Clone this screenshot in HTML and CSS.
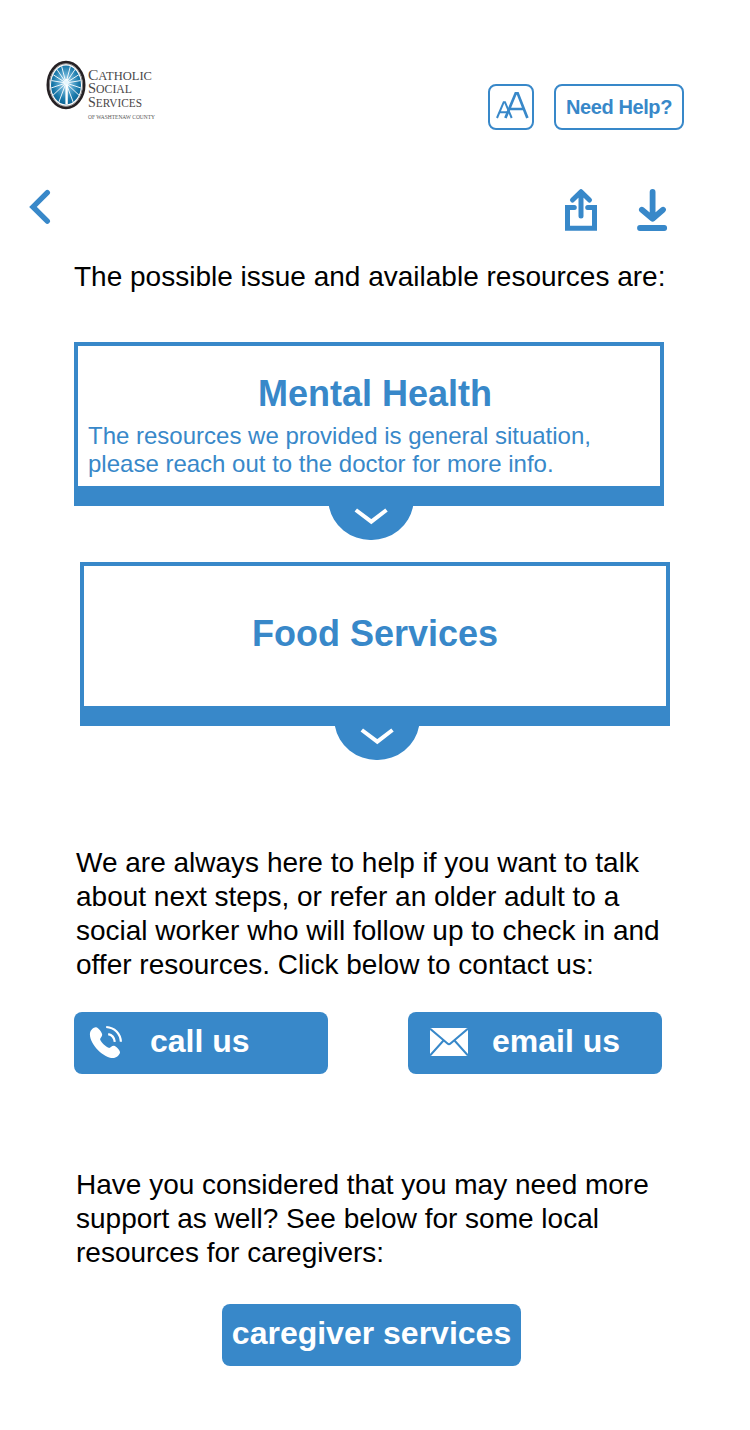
FILE: index.html
```html
<!DOCTYPE html>
<html lang="en">
<head>
<meta charset="utf-8">
<title>Catholic Social Services</title>
<link rel="stylesheet" href="styles.css">
</head>
<body>
<main class="page">
  <header class="header">
    <svg class="logo" width="116" height="64" viewBox="0 0 116 64" role="img" aria-label="Catholic Social Services of Washtenaw County">
      <defs>
        <radialGradient id="glow" cx="50%" cy="44%" r="60%">
          <stop offset="0" stop-color="#d8eff9"/>
          <stop offset=".35" stop-color="#62acd2"/>
          <stop offset=".7" stop-color="#1c7bac"/>
          <stop offset="1" stop-color="#075f8f"/>
        </radialGradient>
        <clipPath id="oval"><ellipse cx="20" cy="25" rx="15" ry="19.6"/></clipPath>
      </defs>
      <ellipse cx="20" cy="25" rx="18.1" ry="22.9" fill="#fff" stroke="#262124" stroke-width="2.8"/>
      <ellipse cx="20" cy="25" rx="16.5" ry="21.3" fill="#fff" stroke="#77777a" stroke-width="1"/>
      <ellipse cx="20" cy="25" rx="15" ry="19.6" fill="url(#glow)"/>
      <g clip-path="url(#oval)" stroke="#fff" stroke-width=".9">
        <path d="M20 23 14.5 2M20 23 8 5M20 23 3 12M20 23 2 20M20 23 2 29M20 23 3 39M20 23 11 47M20 23 25.5 2M20 23 32 5M20 23 37 12M20 23 38 20M20 23 38 29M20 23 37 39M20 23 29 47"/>
        <path d="M20.6 19V45" stroke-width="2.4"/>
      </g>
      <circle cx="20.5" cy="22.5" r="2.2" fill="#e6f6fd"/>
      <g class="logo-name">
        <text x="42" y="19.7" textLength="64" lengthAdjust="spacingAndGlyphs"><tspan class="logo-cap">C</tspan>ATHOLIC</text>
        <text x="42" y="33.1" textLength="44" lengthAdjust="spacingAndGlyphs"><tspan class="logo-cap">S</tspan>OCIAL</text>
        <text x="42" y="46.5" textLength="54" lengthAdjust="spacingAndGlyphs"><tspan class="logo-cap">S</tspan>ERVICES</text>
      </g>
      <text class="logo-place" x="42" y="59.2" textLength="67" lengthAdjust="spacingAndGlyphs">OF WASHTENAW COUNTY</text>
    </svg>
    <div class="header-actions">
      <button class="outline-btn size-btn" aria-label="Text size">
        <svg width="42" height="42" viewBox="0 0 42 42" fill="none" stroke="currentColor">
          <path d="M7 32 13.7 16.2H15L21.7 32M9.5 26.2H19.5" stroke-width="2"/>
          <path d="M15.4 32 25.7 7.3H27.7L37.4 32M19 23H34.5" stroke-width="2.7"/>
        </svg>
      </button>
      <button class="outline-btn help-btn">Need Help?</button>
    </div>
  </header>

  <nav class="toolbar">
    <svg width="24" height="40" viewBox="0 0 24 40" fill="none" stroke="currentColor" stroke-width="5.4">
      <path d="M19.3 5.7 5 19.9 19.3 34.2" stroke-linecap="round"/>
    </svg>
    <div class="toolbar-actions">
      <svg width="34" height="44" viewBox="0 0 34 44" fill="none" stroke="currentColor" stroke-width="5" stroke-linecap="round">
        <path d="M10.3 20.4H3.5V41.3H30.5V20.4H23.7"/>
        <path d="M17 29V5M8.5 13 17 4.7 25.5 13" stroke-linejoin="round"/>
      </svg>
      <svg width="32" height="44" viewBox="0 0 32 44" fill="none" stroke="currentColor" stroke-width="5.8" stroke-linecap="round">
        <path d="M16.6 5V31M5.9 22.7 16.6 31.8 27 22.7M4 41H28.2" stroke-linejoin="round"/>
      </svg>
    </div>
  </nav>

  <p class="intro">The possible issue and available resources are:</p>

  <section class="card">
    <h2 class="card-title">Mental Health</h2>
    <p class="card-note">The resources we provided is general situation,<br>please reach out to the doctor for more info.</p>
    <svg class="card-tab" width="86" height="34" viewBox="0 0 86 34">
      <path d="M.9 0A42.3 41 0 0 0 43 34 42.3 41 0 0 0 85.1 0Z" fill="currentColor"/>
      <path d="M27.8 4 43.3 15.7 58.5 4" fill="none" stroke="#fff" stroke-width="4"/>
    </svg>
  </section>

  <section class="card card-food">
    <h2 class="card-title">Food Services</h2>
    <svg class="card-tab" width="86" height="34" viewBox="0 0 86 34">
      <path d="M.9 0A42.3 41 0 0 0 43 34 42.3 41 0 0 0 85.1 0Z" fill="currentColor"/>
      <path d="M27.8 4 43.3 15.7 58.5 4" fill="none" stroke="#fff" stroke-width="4"/>
    </svg>
  </section>

  <p class="copy contact-copy">We are always here to help if you want to talk<br>about next steps, or refer an older adult to a<br>social worker who will follow up to check in and<br>offer resources. Click below to contact us:</p>

  <div class="contact-row">
    <button class="solid-btn call-btn">
      <svg width="34" height="34" viewBox="0 0 34 34">
        <path d="M1 8C1.5 5 4.8 2 7 2.3 9.4 2.7 13.2 7.6 13.2 9.8 13.2 11.8 10.7 13.2 11.2 14.8 12.2 17.4 17 22 19.6 22.8 21.5 23.4 22.8 20.4 25 20.8 27.3 21.3 31 25.3 31 27.3 31 29.5 27.5 33 24.8 33 15 34-.5 18 1 8Z" fill="#fff"/>
        <path d="M17.2 2C25.7 2.5 31.4 8.6 31.9 16.8M19.2 9.2C23 10 25.3 12.5 25.8 16.8" fill="none" stroke="#fff" stroke-width="2.2"/>
      </svg>
      <span>call us</span>
    </button>
    <button class="solid-btn email-btn">
      <svg width="38" height="28" viewBox="0 0 38 28">
        <path d="M0 0H38V28H0Z" fill="#fff"/>
        <path d="M0 .6 17.5 15.6Q19 16.9 20.5 15.6L38 .6M0 27.6 13.5 12.5M38 27.6 24.5 12.5" fill="none" stroke="#3888c9" stroke-width="2"/>
      </svg>
      <span>email us</span>
    </button>
  </div>

  <p class="copy care-copy">Have you considered that you may need more<br>support as well? See below for some local<br>resources for caregivers:</p>
  <button class="solid-btn care-btn">caregiver services</button>
</main>
</body>
</html>
```

FILE: styles.css
```css
* { box-sizing: border-box; }
body { margin: 0; background: #fff; }
h2, p { margin: 0; font-size: inherit; }
svg { display: block; flex: none; }
button { font: inherit; margin: 0; padding: 0; }

.page {
  width: 750px;
  height: 1430px;
  padding-top: 60px;
  display: flex;
  flex-direction: column;
  align-items: flex-start;
  overflow: hidden;
  font-family: "Liberation Sans", Arial, sans-serif;
  font-size: 28px;
  line-height: 34px;
  color: #000;
}

.header {
  width: 100%;
  height: 70px;
  padding: 0 66px 0 46px;
  display: flex;
  justify-content: space-between;
}
.logo-name { font: 12.5px "Liberation Serif", serif; fill: #4a4749; }
.logo-cap { font-size: 15.5px; }
.logo-place { font: 5.6px "Liberation Serif", serif; fill: #555; }

.header-actions { display: flex; gap: 20px; padding-top: 24px; }
.outline-btn {
  height: 46px;
  border: 2px solid #3888c9;
  border-radius: 8px;
  background: #fff;
  color: #3888c9;
}
.size-btn { width: 46px; }
.help-btn { width: 130px; font-size: 20px; font-weight: 700; letter-spacing: -0.4px; white-space: nowrap; }

.toolbar {
  width: 100%;
  margin-top: 57px;
  padding: 0 82px 0 28px;
  display: flex;
  justify-content: space-between;
  color: #3888c9;
}
.toolbar-actions { display: flex; gap: 38px; }

.intro { margin: 29px 0 0 74px; white-space: nowrap; }

.card {
  position: relative;
  width: 590px;
  height: 164px;
  margin: 48px 0 0 74px;
  padding-top: 26px;
  border: 4px solid #3888c9;
  border-bottom-width: 20px;
  color: #3888c9;
}
.card-title { font-size: 36px; font-weight: 700; line-height: 44px; text-align: center; padding-left: 12px; }
.card-note { padding: 6px 0 0 10px; font-size: 24px; line-height: 28px; white-space: nowrap; }
.card-tab { position: absolute; left: 250px; top: 160px; }
.card-food { margin: 56px 0 0 80px; padding-top: 46px; }
.card-food .card-title { padding-left: 0; }

.copy { margin-left: 76px; white-space: nowrap; }
.contact-copy { margin-top: 120px; }

.contact-row { display: flex; gap: 80px; margin: 30px 0 0 74px; }
.solid-btn {
  height: 62px;
  border: 0;
  border-radius: 8px;
  background: #3888c9;
  color: #fff;
  font-size: 32px;
  font-weight: 700;
  line-height: 36px;
  padding-bottom: 4px;
  white-space: nowrap;
}
.call-btn, .email-btn { width: 254px; display: flex; align-items: center; }
.call-btn { padding-left: 15px; gap: 27px; }
.email-btn { padding-left: 22px; gap: 24px; }
.call-btn svg, .email-btn svg { margin-top: 2px; }
.care-copy { margin-top: 94px; }
.care-btn { width: 299px; margin: 34px 0 0 222px; }
```
